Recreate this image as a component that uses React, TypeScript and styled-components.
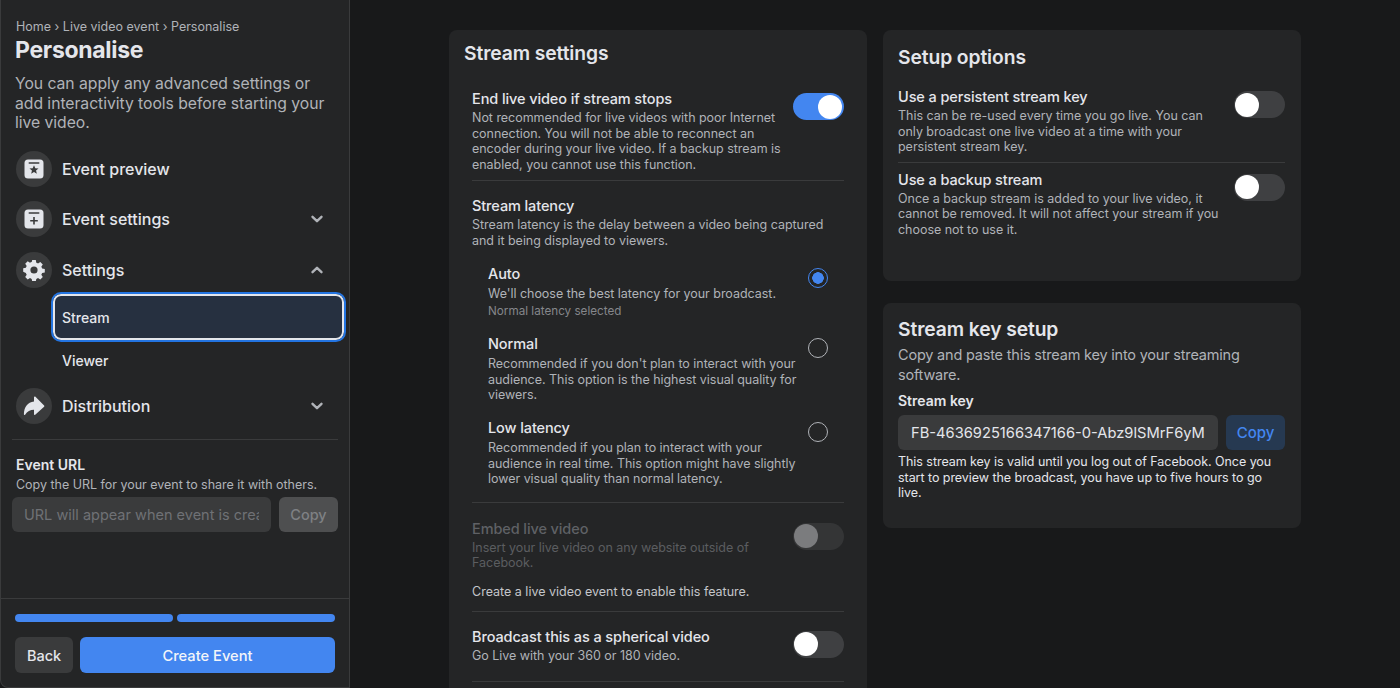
import React from 'react';
import styled, { createGlobalStyle } from 'styled-components';

const GlobalStyle = createGlobalStyle`
  html, body {
    margin: 0;
    padding: 0;
    height: 688px;
    overflow: hidden;
    background: #18191a;
    font-family: Inter, "Liberation Sans", sans-serif;
    -webkit-font-smoothing: antialiased;
  }
  * {
    box-sizing: border-box;
  }
`;

const ChevronDown = () => (
  <svg width="14" height="14" viewBox="0 0 14 14" fill="none">
    <path d="M2.5 4.8 7 9.2l4.5-4.4" stroke="#b0b3b8" strokeWidth="2.4" strokeLinecap="round" strokeLinejoin="round" />
  </svg>
);

const ChevronUp = () => (
  <svg width="14" height="14" viewBox="0 0 14 14" fill="none">
    <path d="M2.5 9.2 7 4.8l4.5 4.4" stroke="#b0b3b8" strokeWidth="2.4" strokeLinecap="round" strokeLinejoin="round" />
  </svg>
);

const PreviewIcon = () => (
  <svg width="20" height="20" viewBox="0 0 20 20">
    <rect x="0.5" y="0.5" width="19" height="19" rx="3.5" fill="#e4e6eb" />
    <rect x="4.5" y="3.2" width="11" height="1.6" rx="0.8" fill="#3a3b3c" />
    <path d="m10 6.2 1.3 3 3.2.25-2.45 2.1.78 3.15L10 13l-2.83 1.7.78-3.15L5.5 9.45l3.2-.25z" fill="#3a3b3c" />
  </svg>
);

const SettingsFormIcon = () => (
  <svg width="20" height="20" viewBox="0 0 20 20">
    <rect x="0.5" y="0.5" width="19" height="19" rx="3.5" fill="#e4e6eb" />
    <rect x="4.5" y="3.2" width="11" height="1.6" rx="0.8" fill="#3a3b3c" />
    <path d="M9.2 8h1.6v3h3v1.5h-3v3H9.2v-3h-3V11h3z" fill="#3a3b3c" />
  </svg>
);

const GearIcon = () => (
  <svg width="22" height="22" viewBox="0 0 22 22">
    <path
      fillRule="evenodd"
      fill="#e4e6eb"
      d="M9.2 1h3.6l.5 2.7c.6.2 1.2.5 1.7.8l2.3-1.5 2.5 2.5-1.5 2.3c.3.5.6 1.1.8 1.7l2.7.5v3.6l-2.7.5c-.2.6-.5 1.2-.8 1.7l1.5 2.3-2.5 2.5-2.3-1.5c-.5.3-1.1.6-1.7.8l-.5 2.7H9.2l-.5-2.7c-.6-.2-1.2-.5-1.7-.8l-2.3 1.5-2.5-2.5 1.5-2.3c-.3-.5-.6-1.1-.8-1.7L.2 12.8V9.2l2.7-.5c.2-.6.5-1.2.8-1.7L2.2 4.7l2.5-2.5L7 3.7c.5-.3 1.1-.6 1.7-.8zM11 7.4a3.6 3.6 0 1 0 0 7.2 3.6 3.6 0 0 0 0-7.2z"
    />
  </svg>
);

const ShareIcon = () => (
  <svg width="22" height="22" viewBox="0 0 22 22">
    <path
      fill="#e4e6eb"
      d="M12.2 1.6c-.5-.4-1.2 0-1.2.6v4.2C4.6 7.2 1 11.8.9 19.3c0 .7.8.9 1.2.4 2.2-3.2 5-4.8 8.9-4.9v4.4c0 .7.7 1 1.2.6l8.9-8.1c.4-.3.4-.9 0-1.2z"
    />
  </svg>
);

const steps = ['a', 'b'];

const settingsDescription = {
  end: 'Not recommended for live videos with poor Internet connection. You will not be able to reconnect an encoder during your live video. If a backup stream is enabled, you cannot use this function.',
  latency: 'Stream latency is the delay between a video being captured and it being displayed to viewers.',
  embed: 'Insert your live video on any website outside of Facebook.',
  persistent: 'This can be re-used every time you go live. You can only broadcast one live video at a time with your persistent stream key.',
  backup: 'Once a backup stream is added to your live video, it cannot be removed. It will not affect your stream if you choose not to use it.',
};

const latencyOptions = [
  {
    name: 'Auto',
    text: "We'll choose the best latency for your broadcast.",
    note: 'Normal latency selected',
    checked: true,
  },
  {
    name: 'Normal',
    text: "Recommended if you don't plan to interact with your audience. This option is the highest visual quality for viewers.",
  },
  {
    name: 'Low latency',
    text: 'Recommended if you plan to interact with your audience in real time. This option might have slightly lower visual quality than normal latency.',
  },
];

const App: React.FC = () => {
  return (
    <StyledPage>
      <GlobalStyle />
      <StyledSidebar>
        <StyledSidebarBody>
          <StyledBreadcrumb>Home › Live video event › Personalise</StyledBreadcrumb>
          <StyledPageTitle>Personalise</StyledPageTitle>
          <StyledIntro>
            You can apply any advanced settings or add interactivity tools before starting your live video.
          </StyledIntro>
          <StyledNav>
            <StyledNavRow>
              <StyledNavIcon><PreviewIcon /></StyledNavIcon>
              <StyledNavLabel>Event preview</StyledNavLabel>
            </StyledNavRow>
            <StyledNavRow>
              <StyledNavIcon><SettingsFormIcon /></StyledNavIcon>
              <StyledNavLabel>Event settings</StyledNavLabel>
              <ChevronDown />
            </StyledNavRow>
            <StyledNavRow>
              <StyledNavIcon><GearIcon /></StyledNavIcon>
              <StyledNavLabel>Settings</StyledNavLabel>
              <ChevronUp />
            </StyledNavRow>
            <StyledSubNav>
              <StyledSubItem $active>Stream</StyledSubItem>
              <StyledSubItem>Viewer</StyledSubItem>
            </StyledSubNav>
            <StyledNavRow>
              <StyledNavIcon><ShareIcon /></StyledNavIcon>
              <StyledNavLabel>Distribution</StyledNavLabel>
              <ChevronDown />
            </StyledNavRow>
          </StyledNav>
          <StyledSidebarDivider />
          <StyledUrlTitle>Event URL</StyledUrlTitle>
          <StyledUrlHint>Copy the URL for your event to share it with others.</StyledUrlHint>
          <StyledUrlRow>
            <StyledUrlField placeholder="URL will appear when event is created" disabled />
            <StyledDisabledButton>Copy</StyledDisabledButton>
          </StyledUrlRow>
        </StyledSidebarBody>
        <StyledSidebarFooter>
          <StyledProgress>
            {steps.map((s) => (
              <StyledProgressStep key={s} />
            ))}
          </StyledProgress>
          <StyledFooterButtons>
            <StyledBackButton>Back</StyledBackButton>
            <StyledCreateButton>Create Event</StyledCreateButton>
          </StyledFooterButtons>
        </StyledSidebarFooter>
      </StyledSidebar>

      <StyledMain>
        <StyledColumn>
          <StyledStreamCard>
            <StyledCardTitle>Stream settings</StyledCardTitle>
            <StyledSettingsList>
              <StyledSettingRow $pad="0 0 8px">
                <StyledSettingText>
                  <StyledSettingName>End live video if stream stops</StyledSettingName>
                  <StyledSettingDesc>{settingsDescription.end}</StyledSettingDesc>
                </StyledSettingText>
                <StyledToggle $on />
              </StyledSettingRow>
              <StyledLatency>
                <StyledSettingName>Stream latency</StyledSettingName>
                <StyledLatencyIntro>{settingsDescription.latency}</StyledLatencyIntro>
                <StyledOptions>
                  {latencyOptions.map((o) => (
                    <StyledOption key={o.name}>
                      <StyledOptionText>
                        <StyledSettingName>{o.name}</StyledSettingName>
                        <StyledSettingDesc>{o.text}</StyledSettingDesc>
                        {o.note && <StyledOptionNote>{o.note}</StyledOptionNote>}
                      </StyledOptionText>
                      <StyledRadio $checked={o.checked} />
                    </StyledOption>
                  ))}
                </StyledOptions>
              </StyledLatency>
              <StyledSettingRow $pad="17px 0 11px">
                <StyledSettingText>
                  <StyledSettingName $disabled>Embed live video</StyledSettingName>
                  <StyledSettingDesc $disabled>{settingsDescription.embed}</StyledSettingDesc>
                  <StyledEmbedNote>Create a live video event to enable this feature.</StyledEmbedNote>
                </StyledSettingText>
                <StyledToggle $disabled />
              </StyledSettingRow>
              <StyledSettingRow $pad="16px 0 17px">
                <StyledSettingText>
                  <StyledSettingName>Broadcast this as a spherical video</StyledSettingName>
                  <StyledSettingDesc>Go Live with your 360 or 180 video.</StyledSettingDesc>
                </StyledSettingText>
                <StyledToggle />
              </StyledSettingRow>
            </StyledSettingsList>
          </StyledStreamCard>
        </StyledColumn>

        <StyledColumn>
          <StyledSetupCard>
            <StyledSetupTitle>Setup options</StyledSetupTitle>
            <StyledSetupRow>
              <StyledSettingText>
                <StyledSettingName>Use a persistent stream key</StyledSettingName>
                <StyledSettingDesc>{settingsDescription.persistent}</StyledSettingDesc>
              </StyledSettingText>
              <StyledToggle />
            </StyledSetupRow>
            <StyledSetupRow>
              <StyledSettingText>
                <StyledSettingName>Use a backup stream</StyledSettingName>
                <StyledSettingDesc>{settingsDescription.backup}</StyledSettingDesc>
              </StyledSettingText>
              <StyledToggle />
            </StyledSetupRow>
          </StyledSetupCard>

          <StyledKeyCard>
            <StyledKeyTitle>Stream key setup</StyledKeyTitle>
            <StyledKeyIntro>Copy and paste this stream key into your streaming software.</StyledKeyIntro>
            <StyledKeyLabel>Stream key</StyledKeyLabel>
            <StyledKeyRow>
              <StyledKeyField>FB-4636925166347166-0-Abz9lSMrF6yM</StyledKeyField>
              <StyledCopyButton>Copy</StyledCopyButton>
            </StyledKeyRow>
            <StyledKeyHelp>
              This stream key is valid until you log out of Facebook. Once you start to preview the broadcast, you have up to five hours to go live.
            </StyledKeyHelp>
          </StyledKeyCard>
        </StyledColumn>
      </StyledMain>
    </StyledPage>
  );
};

const StyledPage = styled.div`
  display: flex;
  width: 1400px;
  height: 688px;
  overflow: hidden;
  background: #18191a;
`;

const StyledSidebar = styled.aside`
  display: flex;
  flex-direction: column;
  flex: 0 0 350px;
  width: 350px;
  min-width: 0;
  height: 688px;
  background: #242526;
  border-left: 1px solid #3a3b3c;
  border-right: 1px solid #3a3b3c;
  border-bottom: 1px solid #3a3b3c;
  border-bottom-left-radius: 8px;
`;

const StyledSidebarBody = styled.div`
  flex: 1;
  min-width: 0;
  padding: 19px 11px 0;
`;

const StyledBreadcrumb = styled.div`
  margin-left: 4px;
  font-size: 12.5px;
  line-height: 16px;
  color: #b0b3b8;
`;

const StyledPageTitle = styled.h1`
  margin: 0 0 0 3px;
  font-size: 23px;
  line-height: 30px;
  font-weight: 700;
  letter-spacing: -0.3px;
  color: #e4e6eb;
`;

const StyledIntro = styled.p`
  margin: 9px 0 0 3px;
  width: 318px;
  font-size: 15.75px;
  line-height: 19.5px;
  letter-spacing: -0.05px;
  color: #b0b3b8;
`;

const StyledNav = styled.nav`
  margin-top: 11px;
`;

const StyledNavRow = styled.div`
  display: flex;
  align-items: center;
  height: 50.5px;
  padding: 0 14px 0 4px;
`;

const StyledNavIcon = styled.div`
  display: flex;
  align-items: center;
  justify-content: center;
  flex: 0 0 36px;
  width: 36px;
  height: 36px;
  margin-right: 10px;
  border-radius: 50%;
  background: #3a3b3c;
`;

const StyledNavLabel = styled.span`
  flex: 1;
  font-size: 16px;
  font-weight: 500;
  color: #e4e6eb;
`;

const StyledSubNav = styled.div`
  margin: -1px 0 -1px 41px;
`;

const StyledSubItem = styled.div<{ $active?: boolean }>`
  display: flex;
  align-items: center;
  height: 43px;
  padding-left: 9px;
  font-size: 14px;
  font-weight: 500;
  color: #e4e6eb;
  ${(p) =>
    p.$active &&
    `
    height: 46px;
    width: 291px;
    margin-bottom: -1px;
    border-radius: 8px;
    border: 2px solid #e4e6eb;
    outline: 2px solid #2374e1;
    background: #263040;
    padding-left: 7px;
  `}
`;

const StyledSidebarDivider = styled.div`
  height: 1px;
  margin-top: 7px;
  width: 326px;
  background: #3a3b3c;
`;

const StyledUrlTitle = styled.div`
  margin: 16px 0 0 4px;
  font-size: 14px;
  line-height: 17px;
  font-weight: 600;
  color: #e4e6eb;
`;

const StyledUrlHint = styled.div`
  margin: 4px 0 0 4px;
  font-size: 12.5px;
  line-height: 16px;
  letter-spacing: -0.02px;
  color: #b0b3b8;
`;

const StyledUrlRow = styled.div`
  display: flex;
  gap: 8px;
  margin-top: 4px;
  width: 326px;
`;

const StyledUrlField = styled.input`
  flex: 1;
  min-width: 0;
  height: 35px;
  padding: 0 12px;
  border: 0;
  border-radius: 6px;
  background: #3a3b3c;
  font-family: inherit;
  font-size: 14.5px;
  &::placeholder {
    color: #6f7175;
    opacity: 1;
  }
`;

const StyledDisabledButton = styled.div`
  flex: 0 0 59px;
  height: 35px;
  display: flex;
  align-items: center;
  justify-content: center;
  border-radius: 6px;
  background: #4e4f50;
  font-size: 14.5px;
  font-weight: 500;
  color: #7f8184;
`;

const StyledSidebarFooter = styled.footer`
  height: 89px;
  padding: 15px 14px 0;
  border-top: 1px solid #3a3b3c;
`;

const StyledProgress = styled.div`
  display: flex;
  gap: 4px;
  width: 320px;
`;

const StyledProgressStep = styled.div`
  flex: 1;
  height: 8px;
  border-radius: 4px;
  background: #4386f0;
`;

const StyledFooterButtons = styled.div`
  display: flex;
  gap: 7px;
  margin-top: 15px;
  width: 320px;
`;

const StyledBackButton = styled.div`
  flex: 0 0 58px;
  height: 36px;
  padding-top: 1px;
  display: flex;
  align-items: center;
  justify-content: center;
  border-radius: 6px;
  background: #3a3b3c;
  font-size: 14.5px;
  font-weight: 500;
  color: #e4e6eb;
`;

const StyledCreateButton = styled.div`
  flex: 1;
  height: 36px;
  padding-top: 1px;
  display: flex;
  align-items: center;
  justify-content: center;
  border-radius: 6px;
  background: #4386f0;
  font-size: 14.7px;
  font-weight: 500;
  color: #f2f5f9;
`;

const StyledMain = styled.main`
  display: grid;
  grid-template-columns: 418px 418px;
  gap: 16px;
  align-items: start;
  padding: 30px 0 0 99px;
`;

const StyledColumn = styled.div`
  display: flex;
  flex-direction: column;
  gap: 22px;
`;

const StyledCard = styled.section`
  border-radius: 8px;
  background: #242526;
`;

const StyledStreamCard = styled(StyledCard)`
  padding: 11px 23px 40px 15px;
`;

const StyledCardTitle = styled.h2`
  margin: 0;
  font-size: 19.3px;
  line-height: 24px;
  font-weight: 600;
  letter-spacing: -0.1px;
  color: #e4e6eb;
`;

const StyledSettingsList = styled.div`
  margin: 25px 0 0 8px;
`;

const StyledSettingRow = styled.div<{ $pad: string }>`
  display: flex;
  justify-content: space-between;
  gap: 10px;
  padding: ${(p) => p.$pad};
  border-bottom: 1px solid #3a3b3c;
`;

const StyledSettingText = styled.div`
  flex: 1;
  min-width: 0;
`;

const StyledSettingName = styled.div<{ $disabled?: boolean }>`
  font-size: 14.5px;
  line-height: 18px;
  font-weight: 500;
  letter-spacing: -0.1px;
  color: ${(p) => (p.$disabled ? '#5f6165' : '#e4e6eb')};
`;

const StyledSettingDesc = styled.div<{ $disabled?: boolean }>`
  margin-top: 2px;
  font-size: 12.5px;
  line-height: 15.6px;
  letter-spacing: -0.03px;
  color: ${(p) => (p.$disabled ? '#5b5d60' : '#b0b3b8')};
`;

const StyledLatencyIntro = styled(StyledSettingDesc)`
  max-width: 360px;
`;

const StyledToggle = styled.div<{ $on?: boolean; $disabled?: boolean }>`
  position: relative;
  flex: 0 0 51px;
  width: 51px;
  height: 27px;
  margin-top: 3px;
  border-radius: 14px;
  background: ${(p) => (p.$on ? '#4386f0' : p.$disabled ? '#343536' : '#3f4042')};
  &::after {
    content: '';
    position: absolute;
    top: 1.5px;
    left: ${(p) => (p.$on ? '25px' : '1px')};
    width: 24px;
    height: 24px;
    border-radius: 50%;
    background: ${(p) => (p.$disabled ? '#7b7c7e' : '#ffffff')};
  }
`;

const StyledLatency = styled.div`
  padding: 16px 0 15px;
  border-bottom: 1px solid #3a3b3c;
`;

const StyledOptions = styled.div`
  display: flex;
  flex-direction: column;
  gap: 16px;
  margin-top: 16px;
  padding-left: 16px;
`;

const StyledOption = styled.div`
  display: flex;
  justify-content: space-between;
  gap: 10px;
`;

const StyledOptionText = styled.div`
  width: 314px;
  ${StyledSettingName} {
    margin-bottom: 3px;
  }
`;

const StyledOptionNote = styled.div`
  margin-top: 3px;
  font-size: 11.7px;
  line-height: 15px;
  color: #85878b;
`;

const StyledRadio = styled.div<{ $checked?: boolean }>`
  flex: 0 0 20px;
  width: 20px;
  height: 20px;
  margin: 3px 16px 0 0;
  border-radius: 50%;
  border: 1.5px solid ${(p) => (p.$checked ? '#4386f0' : '#b0b3b8')};
  background: ${(p) => (p.$checked ? 'radial-gradient(circle, #4386f0 0 5.5px, transparent 6px)' : 'transparent')};
`;

const StyledEmbedNote = styled.div`
  margin-top: 13px;
  font-size: 12.5px;
  line-height: 16px;
  color: #c4c6ca;
`;

const StyledSetupCard = styled(StyledCard)`
  height: 251px;
  padding: 15px 16px 0 15px;
`;

const StyledSetupTitle = styled(StyledCardTitle)`
  margin-bottom: 19px;
`;

const StyledSetupRow = styled.div`
  display: flex;
  justify-content: space-between;
  gap: 10px;
  padding: 0 0 7px;
  margin-bottom: 8px;
  border-bottom: 1px solid #3a3b3c;
  &:last-child {
    border-bottom: 0;
  }
`;

const StyledKeyCard = styled(StyledCard)`
  height: 225px;
  padding: 14px 16px 0 15px;
`;

const StyledKeyTitle = styled(StyledCardTitle)``;

const StyledKeyIntro = styled.p`
  margin: 4px 0 0;
  font-size: 14.5px;
  line-height: 19.5px;
  letter-spacing: -0.2px;
  color: #b0b3b8;
`;

const StyledKeyLabel = styled.div`
  margin-top: 8px;
  font-size: 14px;
  line-height: 18px;
  font-weight: 600;
  color: #e4e6eb;
`;

const StyledKeyRow = styled.div`
  display: flex;
  gap: 8px;
  margin-top: 5px;
`;

const StyledKeyField = styled.div`
  flex: 1;
  min-width: 0;
  height: 35px;
  padding: 0 13px;
  display: flex;
  align-items: center;
  overflow: hidden;
  white-space: nowrap;
  border-radius: 6px;
  background: #3a3b3c;
  font-size: 14.7px;
  color: #e4e6eb;
`;

const StyledCopyButton = styled.div`
  flex: 0 0 59px;
  height: 35px;
  display: flex;
  align-items: center;
  justify-content: center;
  border-radius: 6px;
  background: #263951;
  font-size: 15px;
  font-weight: 500;
  color: #4386f0;
`;

const StyledKeyHelp = styled.p`
  margin: 4px 0 0;
  font-size: 12.5px;
  line-height: 15.6px;
  letter-spacing: -0.05px;
  color: #e4e6eb;
`;

export default App;
